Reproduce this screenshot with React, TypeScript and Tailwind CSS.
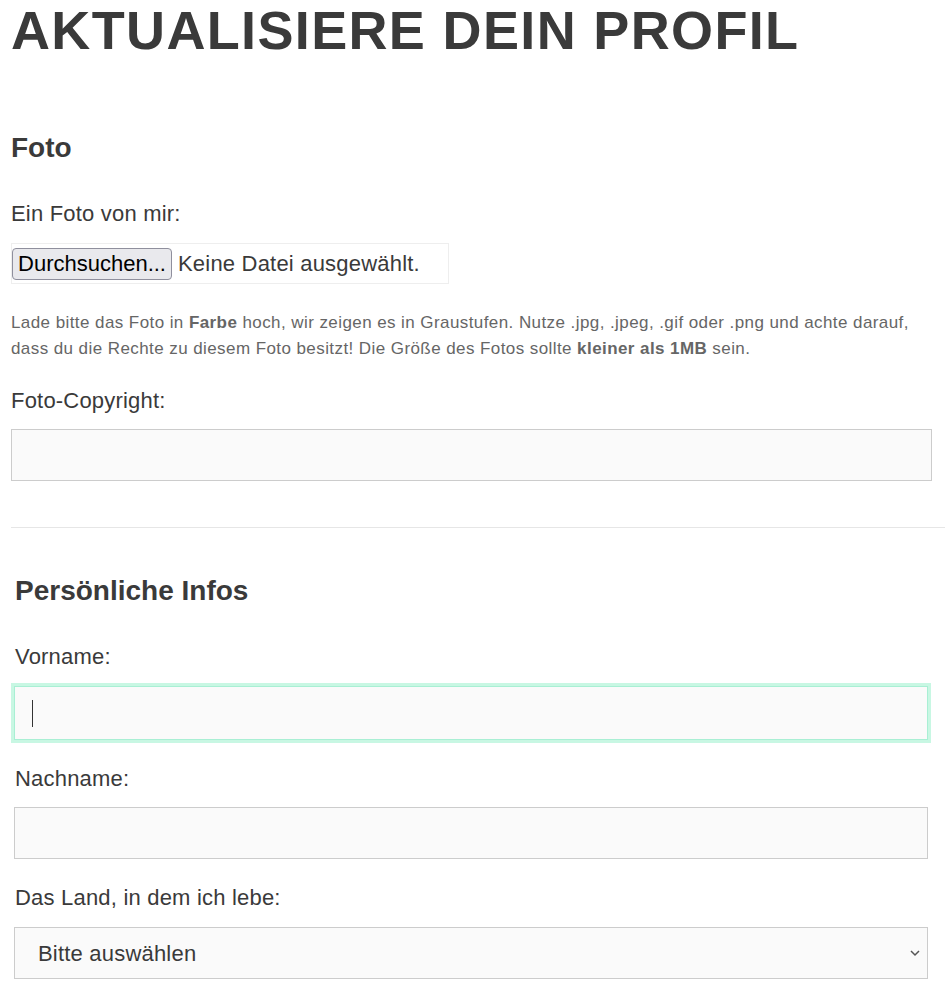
import React from "react";

export default function App() {
  return (
    <div className="min-h-screen bg-white pl-[11px] font-['Liberation_Sans',Arial,sans-serif] text-[#3a3a3a]">
      <h1 className="pt-[1px] text-[54px] leading-[58px] font-bold uppercase tracking-[1.35px]">
        Aktualisiere dein Profil
      </h1>

      {/* Foto */}
      <section>
        <h2 className="mt-[73px] text-[28px] leading-[32px] font-bold">Foto</h2>
        <label className="mt-[36px] block text-[22px] leading-[28px] tracking-[0.2px]">
          Ein Foto von mir:
        </label>
        <div className="mt-[15px] flex h-[41px] w-[438px] items-center border border-[#eeeeee]">
          <button className="h-[32px] w-[160px] rounded-[4px] border border-[#8f8f9d] bg-[#e9e9ed] text-[22px] leading-none text-black">
            Durchsuchen...
          </button>
          <span className="ml-[6px] text-[22px] leading-none tracking-[0.2px]">
            Keine Datei ausgewählt.
          </span>
        </div>
        <p className="mt-[26px] w-[915px] text-[17px] leading-[26px] tracking-[0.42px] text-[#666]">
          Lade bitte das Foto in <b>Farbe</b> hoch, wir zeigen es in Graustufen.
          Nutze .jpg, .jpeg, .gif oder .png und achte darauf, dass du die Rechte
          zu diesem Foto besitzt! Die Größe des Fotos sollte{" "}
          <b>kleiner als 1MB</b> sein.
        </p>
        <label className="mt-[25px] block text-[22px] leading-[28px] tracking-[0.2px]">
          Foto-Copyright:
        </label>
        <input
          type="text"
          className="mt-[14px] block h-[52px] w-[921px] border border-[#cccccc] bg-[#fafafa] px-[17px] text-[22px] outline-none"
        />
      </section>

      <hr className="mt-[46px] border-0 border-t border-[#e6e6e6]" />

      {/* Persönliche Infos */}
      <section className="px-[3px]">
        <h2 className="mt-[47px] pl-[1px] text-[28px] leading-[32px] font-bold">
          Persönliche Infos
        </h2>
        <label className="mt-[36px] block pl-[1px] text-[22px] leading-[28px] tracking-[0.2px]">
          Vorname:
        </label>
        <div className="relative mt-[15px] w-[914px]">
          <input
            type="text"
            className="block h-[54px] w-full border border-[#a9efd4] bg-[#fafafa] px-[17px] text-[22px] caret-transparent shadow-[0_0_0_3px_#c8f7e3] outline-none"
          />
          <span className="absolute left-[18px] top-[14px] h-[27px] w-px bg-[#333]" />
        </div>
        <label className="mt-[25px] block pl-[1px] text-[22px] leading-[28px] tracking-[0.2px]">
          Nachname:
        </label>
        <input
          type="text"
          className="mt-[14px] block h-[52px] w-[914px] border border-[#cccccc] bg-[#fafafa] px-[17px] text-[22px] outline-none"
        />
        <label className="mt-[25px] block pl-[1px] text-[22px] leading-[28px] tracking-[0.2px]">
          Das Land, in dem ich lebe:
        </label>
        <div className="relative mt-[15px] w-[914px]">
          <select className="block h-[52px] w-full appearance-none border border-[#cccccc] bg-[#fafafa] pl-[23px] text-[22px] tracking-[0.2px] text-[#3a3a3a] outline-none">
            <option>Bitte auswählen</option>
          </select>
          <svg
            className="pointer-events-none absolute right-[8px] top-[23px]"
            width="10"
            height="7"
            viewBox="0 0 10 7"
            fill="none"
            stroke="#555"
            strokeWidth="1.5"
          >
            <path d="M1 1l4 4 4-4" />
          </svg>
        </div>
      </section>
    </div>
  );
}
